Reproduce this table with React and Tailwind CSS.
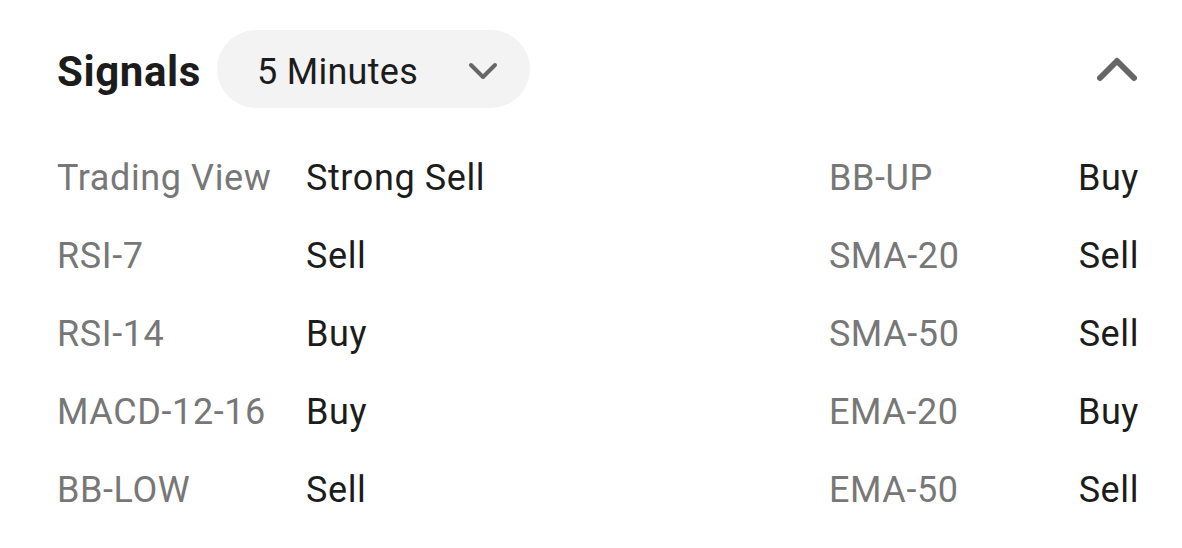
import React from "react";

const rows = [
  ["Trading View", "Strong Sell", "BB-UP", "Buy"],
  ["RSI-7", "Sell", "SMA-20", "Sell"],
  ["RSI-14", "Buy", "SMA-50", "Sell"],
  ["MACD-12-16", "Buy", "EMA-20", "Buy"],
  ["BB-LOW", "Sell", "EMA-50", "Sell"],
];

export default function App() {
  return (
    <div
      className="w-[1182px] h-[548px] bg-white pl-[57px] pr-[43px] pt-[30px]"
      style={{ fontFamily: "Roboto, 'Liberation Sans', sans-serif" }}
    >
      <div className="flex items-center h-[78px]">
        <div className="text-[42px] font-bold text-[#1c1c1c] leading-none tracking-[0.6px] pt-[6px]">Signals</div>
        <div className="ml-[16px] h-[78px] w-[313px] rounded-full bg-[#f3f3f3] flex items-center pl-[40px] pr-[32px]">
          <span className="text-[36px] text-[#1c1c1c] leading-none tracking-[0.3px] pt-[5px]">5 Minutes</span>
          <svg className="ml-auto mt-[4px]" width="30" height="20" viewBox="0 0 30 20">
            <path d="M3 4 L15 16 L27 4" fill="none" stroke="#666" strokeWidth="4" strokeLinecap="round" strokeLinejoin="round" />
          </svg>
        </div>
        <svg className="ml-auto mr-[2px]" width="40" height="26" viewBox="0 0 40 26">
          <path d="M3 22 L20 5 L37 22" fill="none" stroke="#666" strokeWidth="6" strokeLinecap="round" strokeLinejoin="round" />
        </svg>
      </div>
      <div className="mt-[30px] grid grid-cols-[249px_1fr_249px_auto] tracking-[0.6px]">
        {rows.map((r, i) => (
          <React.Fragment key={i}>
            <div className="h-[78px] flex items-center text-[36px] text-[#777] pt-[2px]">{r[0]}</div>
            <div className="h-[78px] flex items-center text-[36px] text-[#1c1c1c] pt-[2px]">{r[1]}</div>
            <div className="h-[78px] flex items-center text-[36px] text-[#777] pt-[2px]">{r[2]}</div>
            <div className="h-[78px] flex items-center justify-end text-[36px] text-[#1c1c1c] pt-[2px]">{r[3]}</div>
          </React.Fragment>
        ))}
      </div>
    </div>
  );
}
